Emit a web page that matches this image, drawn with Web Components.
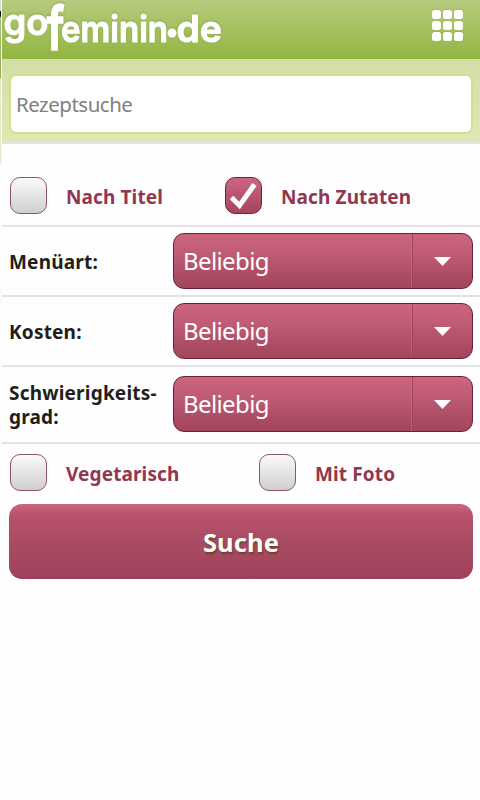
<!DOCTYPE html>
<html lang="de"><head><meta charset="utf-8"><title>gofeminin.de – Rezeptsuche</title>
<style>html,body{margin:0;background:#fefefe;overflow:hidden}body{font-family:"Noto Sans","Open Sans",sans-serif}</style></head><body>
<recipe-page></recipe-page>
<script>
const define=(name,markup)=>{
  const t=document.createElement('template');t.innerHTML=markup;
  customElements.define(name,class extends HTMLElement{
    constructor(){super();this.attachShadow({mode:'open'}).append(t.content.cloneNode(true));}
  });
};
define('site-logo',`<style>:host{display:block;width:222px;height:56px}svg{display:block;overflow:visible;filter:drop-shadow(0 -1px 1px #71933b80)}text{font-family:Inter,sans-serif;font-weight:600;fill:#fff;stroke:#fff;stroke-width:1.1;stroke-linejoin:round}</style>
<svg width="222" height="56" viewBox="0 0 222 56">
<text x="3.500" y="34.500" font-size="36" textLength="45" lengthAdjust="spacingAndGlyphs">go</text>
<text transform="translate(46.500 50) scale(1 1.3)" x="0" y="0" font-size="47" font-weight="500" textLength="18" lengthAdjust="spacingAndGlyphs">f</text>
<text x="61" y="41.500" font-size="36" textLength="107" lengthAdjust="spacingAndGlyphs">eminin</text>
<circle cx="172" cy="33" r="4.500" fill="#fff"/>
<text x="176.500" y="42" font-size="37" textLength="45.500" lengthAdjust="spacingAndGlyphs">de</text></svg>`);
define('grid-icon',`<style>:host{display:grid;grid-template-columns:repeat(3,9px);gap:2px;grid-auto-rows:9px}i{background:#fff;border-radius:2.5px;box-shadow:0 -1px 1px #83a44b55}</style><i></i><i></i><i></i><i></i><i></i><i></i><i></i><i></i><i></i>`);
define('site-header',`<style>:host{display:flex;justify-content:space-between;height:59px;box-sizing:border-box;padding:0 17px 0 0;background:linear-gradient(#b6cb7d,#93b541)}grid-icon{margin-top:10px}site-logo{margin-left:-2px}</style><site-logo></site-logo><grid-icon></grid-icon>`);
define('search-field',`<style>:host{display:block;height:85px;box-sizing:border-box;padding:15px 7px 8px;background:linear-gradient(#d3dea7,#dde8b4);border-bottom:2px solid #e4e4e4}div{height:60px;box-sizing:border-box;border:2px solid #cfe08f;border-radius:7px;background:#fff;color:#808080;font:20.5px/56px "Noto Sans",sans-serif;letter-spacing:-.5px;padding-left:5px}</style><div><slot></slot></div>`);
define('check-option',`<style>:host{display:flex;align-items:center;height:38px;gap:19px;color:#933650;font-weight:700;font-size:19px}span{width:37px;height:37px;margin-bottom:1px;box-sizing:border-box;border:1.5px solid #8c5568;border-radius:10px;background:linear-gradient(#fafafa,#cfcfcf);flex:none}svg{display:none}:host([checked]) span{background:linear-gradient(#cb6780,#a6445d);border-color:#74203a}:host([checked]) svg{display:block;margin:-1px}b{white-space:nowrap;font-weight:700;padding-top:1px;letter-spacing:.12px}</style><span><svg width="37" height="37"><path d="M6.500 20.500 14.500 28.500 29.500 7.500" fill="none" stroke="#fff" stroke-width="5"/></svg></span><b><slot></slot></b>`);
define('option-row',`<style>:host{display:flex;box-sizing:border-box;border-bottom:2px solid #e2e2e4;padding-left:8px}</style><slot></slot>`);
define('drop-down',`<style>:host{display:flex;width:300px;height:56px;box-sizing:border-box;border:1px solid #6c2038;border-radius:11px;background:linear-gradient(#cc6580,#c05c75 35%,#aa4b62 80%,#a3465d);color:#fff;font-size:24px;letter-spacing:-.6px;line-height:54px}span{flex:1;padding-left:9px}i{display:flex;width:60px;box-sizing:border-box;border-left:1px solid #a04560;box-shadow:-1px 0 #d07b9060;align-items:center;justify-content:center}</style><span><slot></slot></span><i><svg width="18" height="9"><path d="M0 0h17L8.500 9z" fill="#fff"/></svg></i>`);
define('form-row',`<style>:host{display:flex;align-items:center;justify-content:space-between;box-sizing:border-box;border-bottom:2px solid #e2e2e4;padding:0 7px;height:70px}:host(.tall) drop-down{margin-top:-1px}b{color:#211f1a;font-size:19px;letter-spacing:.2px;line-height:24px;white-space:pre;padding-top:1px}</style><b><slot name="label"></slot></b><drop-down><slot></slot></drop-down>`);
define('search-button',`<style>:host{display:block;margin:0 7px;height:75px;border-radius:13px;background:linear-gradient(#cb6580,#b7526a 16%,#a94c63 50%,#9f415b);color:#fffef5;text-align:center;font-weight:700;font-size:25.5px;letter-spacing:.1px;line-height:76px;text-shadow:1px 2px 2px #4a3d1da0}</style><slot></slot>`);
define('recipe-page',`<style>:host{display:grid;grid-template-columns:2px 478px;height:800px}aside{background:linear-gradient(#d5d7d9 0 11px,#111 11px 16px,#a9bd8a 18px,#8fac4c 78px,#e1e9c7 79px 163px,#fefefe 164px);border-right:1px solid #f9fbf4;box-sizing:border-box}main{min-width:0}.a{height:83px;padding-top:33px;align-items:flex-start}.a check-option:first-child{width:215px}.v{display:flex;padding:10px 7px 12px 8px;height:38px}.v check-option:first-child{width:249px}.tall{height:77px}</style>
<aside></aside><main><site-header></site-header><search-field>Rezeptsuche</search-field>
<option-row class="a"><check-option>Nach Titel</check-option><check-option checked>Nach Zutaten</check-option></option-row>
<form-row><span slot="label">Menüart:</span>Beliebig</form-row><form-row><span slot="label">Kosten:</span>Beliebig</form-row><form-row class="tall"><span slot="label">Schwierigkeits-<br>grad:</span>Beliebig</form-row>
<div class="v"><check-option>Vegetarisch</check-option><check-option>Mit Foto</check-option></div><search-button>Suche</search-button></main>`);
</script></body></html>
